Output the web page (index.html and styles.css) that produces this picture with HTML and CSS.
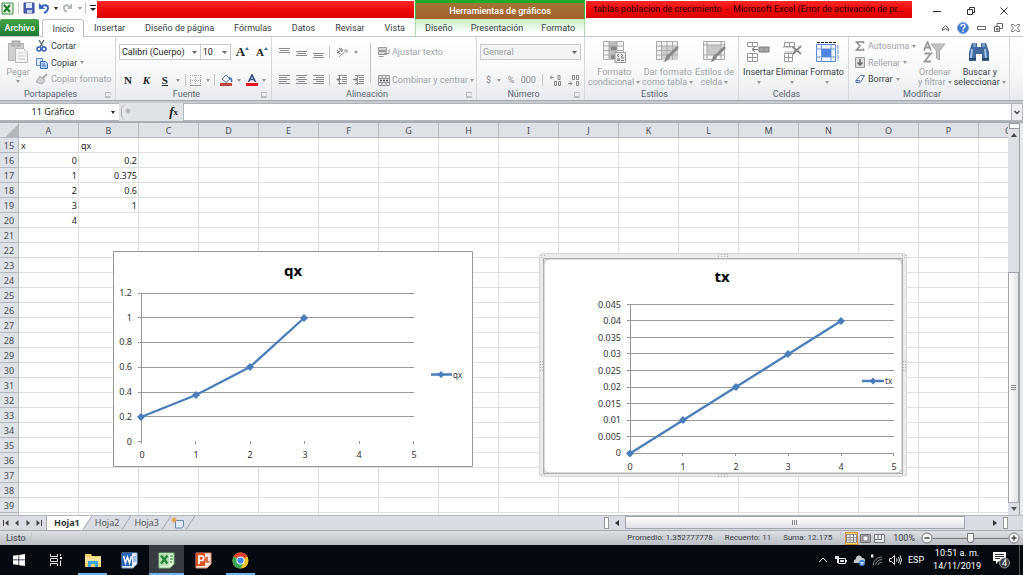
FILE: index.html
```html
<!DOCTYPE html>
<html lang="es">
<head>
<meta charset="utf-8">
<title>tablas poblacion de crecimiento - Microsoft Excel</title>
<link rel="stylesheet" href="styles.css">
</head>
<body>
<header class="top">
  <div class="top-left">
    <div class="qat">
      <svg width="13" height="13" viewBox="0 0 13 13"><path d="M1 1h11v11H1z" fill="#e4f2e2" stroke="#3a8c3f"/><path d="M3 3l6 7M9 3l-6 7" stroke="#1f7a2c" stroke-width="2"/></svg>
      <i class="vsep"></i>
      <button class="flat" aria-label="Guardar"><svg width="12" height="12" viewBox="0 0 12 12"><path d="M1 1h10v10H1z" fill="#4f62b8" stroke="#37458f"/><path d="M3 1h6v5H3z" fill="#dfe8f8"/><path d="M4 8h5v3H4z" fill="#c3cde4"/></svg></button>
      <button class="flat" aria-label="Deshacer"><svg width="12" height="12" viewBox="0 0 12 12"><path d="M3 5c3-3 7-2 7 1 0 2-2 4-4 5" fill="none" stroke="#3566bd" stroke-width="2"/><path d="M1 1v6h6z" fill="#3566bd"/></svg></button>
      <i class="caret dark"></i>
      <button class="flat" aria-label="Rehacer"><svg width="12" height="12" viewBox="0 0 12 12"><path d="M8 5C5 2 2 3 2 6c0 2 1 3 3 4" fill="none" stroke="#b4b8bd" stroke-width="2"/><path d="M10 1v6H5z" fill="#b4b8bd"/></svg></button>
      <i class="caret"></i>
      <i class="vsep"></i>
      <svg width="6" height="8" viewBox="0 0 6 8"><path d="M0 1.500h6" stroke="#222"/><path d="M0 4h6L3 7z" fill="#222"/></svg>
    </div>
    <div class="red"></div>
  </div>
  <div class="context-title">Herramientas de gráficos</div>
  <div class="top-right">
    <div class="red doc-title">tablas poblacion de crecimiento&nbsp; -&nbsp; Microsoft Excel (Error de activación de pr...</div>
    <div class="win-buttons">
      <button class="flat" aria-label="Minimizar"><svg width="8" height="8" viewBox="0 0 8 8"><path d="M0 4.500h8" stroke="#333"/></svg></button>
      <button class="flat" aria-label="Restaurar"><svg width="8" height="8" viewBox="0 0 8 8"><path d="M.5 2.500h5v5h-5zM2.500 2V.5h5v5H6" fill="none" stroke="#333"/></svg></button>
      <button class="flat" aria-label="Cerrar"><svg width="8" height="8" viewBox="0 0 8 8"><path d="M.5.5l7 7M7.500.5l-7 7" stroke="#333"/></svg></button>
    </div>
  </div>
  <nav class="tabs">
    <button class="file">Archivo</button>
    <button class="tab active">Inicio</button>
    <button class="tab">Insertar</button>
    <button class="tab">Diseño de página</button>
    <button class="tab">Fórmulas</button>
    <button class="tab">Datos</button>
    <button class="tab">Revisar</button>
    <button class="tab">Vista</button>
  </nav>
  <nav class="context-tabs">
    <button class="tab">Diseño</button>
    <button class="tab">Presentación</button>
    <button class="tab">Formato</button>
  </nav>
  <div class="help">
    <button class="flat" aria-label="Contraer"><svg width="7" height="6" viewBox="0 0 7 6"><path d="M.5 5.500V3.500l3-3 3 3v2l-3-2z" fill="#fff" stroke="#555"/></svg></button>
    <button class="flat" aria-label="Ayuda"><svg width="12" height="12" viewBox="0 0 12 12"><circle cx="6" cy="6" r="5.500" fill="#3f78cc" stroke="#7fa6de"/><path d="M4 4.500c0-3 4-2.500 4-.2C8 5.500 6 5.800 6 7.500M6 8.500V10" fill="none" stroke="#fff" stroke-width="1.400"/></svg></button>
    <button class="flat" aria-label="Minimizar libro"><svg width="9" height="6" viewBox="0 0 9 6"><path d="M.5 1.500h8v3h-8z" fill="#fff" stroke="#666"/></svg></button>
    <button class="flat" aria-label="Restaurar libro"><svg width="9" height="9" viewBox="0 0 9 9"><path d="M.5 3.500h5v5h-5zM3 3V.5h5.500v5H6M2.500 5.500h1.500v1.500H2.500z" fill="none" stroke="#666"/></svg></button>
    <button class="flat" aria-label="Cerrar libro"><svg width="9" height="8" viewBox="0 0 9 8"><path d="M.5.5h2.200l1.800 1.800L6.300.5h2.200v1.300L6.400 4l2.100 2.200v1.300H6.300L4.500 5.700 2.700 7.500H.5V6.200L2.600 4 .5 1.800z" fill="#fff" stroke="#666" stroke-width=".9"/></svg></button>
  </div>
</header>

<section class="ribbon">
  <div class="group">
    <div class="body">
      <button class="big off paste"><svg width="22" height="24" viewBox="0 0 22 24"><path d="M1.500 3.500h15v17h-15z" fill="#cfcfcf" stroke="#b3b3b3"/><path d="M5 1h8v5H5z" fill="#bdbdbd" stroke="#a5a5a5"/><path d="M8.500 8.500h8l4 4v10h-12z" fill="#f4f4f4" stroke="#b8b8b8"/><path d="M11 13h5M11 16h7M11 19h7" stroke="#c6c6c6"/></svg>Pegar<i class="caret"></i></button>
      <div class="side">
        <button class="row"><svg width="12" height="12" viewBox="0 0 12 12"><path d="M3 0l4 7M8 0L4 7" stroke="#6b7480" stroke-width="1.500"/><circle cx="3" cy="9" r="2" fill="none" stroke="#2d62b5" stroke-width="1.500"/><circle cx="8" cy="9" r="2" fill="none" stroke="#2d62b5" stroke-width="1.500"/></svg>Cortar</button>
        <button class="row"><svg width="12" height="12" viewBox="0 0 12 12"><path d="M.5 1.500h6v7h-6z" fill="#dce9fb" stroke="#5f8bcb"/><path d="M4.500 4.500h5l2 2v5h-7z" fill="#bcd4f6" stroke="#3c6cb8"/><path d="M6 7h3M6 9h4" stroke="#3c6cb8"/></svg>Copiar <i class="caret"></i></button>
        <button class="row off"><svg width="12" height="12" viewBox="0 0 12 12"><path d="M11 1L6 6" stroke="#aaa" stroke-width="2"/><path d="M4 3l5 4-3 4-6-2z" fill="#d2d2d2" stroke="#aaa"/></svg>Copiar formato</button>
      </div>
    </div>
    <div class="label">Portapapeles<i class="launch"></i></div>
  </div>

  <div class="group">
    <div class="body lines">
      <div class="line joined">
        <select class="combo family" aria-label="Fuente"><option>Calibri (Cuerpo)</option></select><select class="combo size" aria-label="Tamaño"><option>10</option></select>
        <button class="flat serif grow" aria-label="Aumentar tamaño">A<i class="up"></i></button>
        <button class="flat serif shrink" aria-label="Reducir tamaño">A<i class="up"></i></button>
      </div>
      <div class="line font-line">
        <button class="flat serif"><b>N</b></button>
        <button class="flat serif"><b><em>K</em></b></button>
        <button class="flat serif"><b><u>S</u></b></button>
        <i class="caret"></i><i class="vsep"></i>
        <button class="flat" aria-label="Bordes"><svg width="11" height="11" viewBox="0 0 11 11"><path d="M.5 0v10M5.500 0v10M10.500 0v10M0 .5h11M0 5.500h11" stroke="#aaa" stroke-dasharray="1 1"/><path d="M0 10.500h11" stroke="#999"/></svg></button>
        <i class="caret"></i><i class="vsep"></i>
        <button class="flat" aria-label="Relleno"><svg width="13" height="12" viewBox="0 0 13 12"><path d="M2 5l4-4 4 4-4 3.500z" fill="#eef3fa" stroke="#4a6ea8"/><path d="M9 4c2 0 3 1 2.500 4" stroke="#2f64b5" stroke-width="1.500" fill="none"/><path d="M0 9h12v3H0z" fill="#c0453b"/></svg></button>
        <i class="caret"></i>
        <button class="flat" aria-label="Color de fuente"><svg width="12" height="12" viewBox="0 0 12 12"><path d="M2.500 8L6 .8 9.500 8M4 5.500h4" fill="none" stroke="#3b5280" stroke-width="1.600"/><path d="M0 9h12v3H0z" fill="#e8121c"/></svg></button>
        <i class="caret"></i>
      </div>
    </div>
    <div class="label">Fuente<i class="launch"></i></div>
  </div>

  <div class="group">
    <div class="body align-body">
      <div class="lines">
        <div class="line align-line">
          <button class="flat" aria-label="Alinear arriba"><svg width="11" height="11" viewBox="0 0 11 11"><path d="M0 1.500h11M1 3.500h9M0 5.500h11" stroke="#8c8c8c"/></svg></button>
          <button class="flat" aria-label="Alinear en el medio"><svg width="11" height="11" viewBox="0 0 11 11"><path d="M0 4.500h11M1 6.500h9M0 8.500h11" stroke="#8c8c8c"/></svg></button>
          <button class="flat" aria-label="Alinear abajo"><svg width="11" height="11" viewBox="0 0 11 11"><path d="M0 6.500h11M1 8.500h9M0 10.500h11" stroke="#8c8c8c"/></svg></button>
          <i class="vsep"></i>
          <button class="flat" aria-label="Orientación"><svg width="12" height="11" viewBox="0 0 12 11"><path d="M3 10l8-7M8 3h3v3" fill="none" stroke="#999"/><path d="M1 3l3 4M3 1l3 4M1 6l3-2M5 1l2 3" stroke="#888" stroke-width="1.200"/></svg></button>
          <i class="caret"></i>
        </div>
        <div class="line align-line">
          <button class="flat" aria-label="Izquierda"><svg width="11" height="10" viewBox="0 0 11 10"><path d="M0 .5h11M0 2.500h8M0 4.500h11M0 6.500h8M0 8.500h11" stroke="#8c8c8c"/></svg></button>
          <button class="flat" aria-label="Centrar"><svg width="11" height="10" viewBox="0 0 11 10"><path d="M0 .5h11M2 2.500h7M0 4.500h11M2 6.500h7M0 8.500h11" stroke="#8c8c8c"/></svg></button>
          <button class="flat" aria-label="Derecha"><svg width="11" height="10" viewBox="0 0 11 10"><path d="M0 .5h11M3 2.500h8M0 4.500h11M3 6.500h8M0 8.500h11" stroke="#8c8c8c"/></svg></button>
          <i class="vsep"></i>
          <button class="flat" aria-label="Disminuir sangría"><svg width="11" height="10" viewBox="0 0 11 10"><path d="M2 .5h9M6 2.500h5M6 4.500h5M6 6.500h5M2 8.500h9M3.500 0v10" stroke="#8c8c8c"/><path d="M5 4.500H1M3 2.500l-2 2 2 2" fill="none" stroke="#777"/></svg></button>
          <button class="flat" aria-label="Aumentar sangría"><svg width="11" height="10" viewBox="0 0 11 10"><path d="M2 .5h9M6 2.500h5M6 4.500h5M6 6.500h5M2 8.500h9M4.500 0v10" stroke="#8c8c8c"/><path d="M0 4.500h4M2 2.500l2 2-2 2" fill="none" stroke="#777"/></svg></button>
        </div>
      </div>
      <i class="vsep tall"></i>
      <div class="lines">
        <button class="row off"><svg width="12" height="11" viewBox="0 0 12 11"><path d="M.5.5h8v3h-8zM.5 4.500h8v3h-8z" fill="#d8d8d8" stroke="#999"/><path d="M.5 9.500h5M11 2.500v4H6" fill="none" stroke="#999"/></svg>Ajustar texto</button>
        <button class="row off"><svg width="12" height="11" viewBox="0 0 12 11"><path d="M.5.5h11v10H.5zM0 3.500h12M0 7.500h12M4 0v3M8 0v3M4 8v3M8 8v3" fill="#e2e2e2" stroke="#999"/><path d="M2 5.500h2M8 5.500h2M5 5.500h2" stroke="#555" stroke-width="1.500"/></svg>Combinar y centrar <i class="caret"></i></button>
      </div>
    </div>
    <div class="label">Alineación<i class="launch"></i></div>
  </div>

  <div class="group">
    <div class="body lines">
      <div class="line"><select class="combo general" aria-label="Formato de número"><option>General</option></select></div>
      <div class="line number-line">
        <button class="flat">$</button><i class="caret"></i>
        <button class="flat">%</button>
        <button class="flat">000</button>
        <i class="vsep"></i>
        <button class="flat" aria-label="Aumentar decimales"><svg width="12" height="11" viewBox="0 0 12 11"><path d="M0 2.500h4M2 .5l-2 2 2 2M8 .5h2v4H8zM4.500 6.500h2v4h-2zM8.500 6.500h2v4h-2z" fill="none" stroke="#888"/></svg></button>
        <button class="flat" aria-label="Disminuir decimales"><svg width="12" height="11" viewBox="0 0 12 11"><path d="M0 8.500h4M2 6.500l2 2-2 2M4.500.5h2v4h-2zM8.500.5h2v4h-2zM8.500 6.500h2v4h-2z" fill="none" stroke="#888"/></svg></button>
      </div>
    </div>
    <div class="label">Número<i class="launch"></i></div>
  </div>

  <div class="group">
    <div class="body styles-body">
      <button class="big off"><svg width="23" height="22" viewBox="0 0 23 22"><path d="M.5.5h20v18H.5z" fill="#f3f3f3" stroke="#aaa"/><path d="M6 0h8v19H6z" fill="#bdbdbd"/><path d="M8 5h6v4H8zM8 14h4v4H8z" fill="#888"/><path d="M0 5h21M0 9.500h21M0 14h21M6 0v19M14 0v19" stroke="#aaa"/><path d="M12 11.500h10.500v10H12z" fill="#ececec" stroke="#999"/><path d="M16 13l-2 1.500 2 1.500M18 13l2 1.500-2 1.500M14 18h3M18 17h3M18 19.500h3M14 19.500h3" fill="none" stroke="#777"/></svg><span>Formato<br>condicional <i class="caret"></i></span></button>
      <button class="big off"><svg width="23" height="22" viewBox="0 0 23 22"><path d="M.5.5h21v18H.5z" fill="#f3f3f3" stroke="#aaa"/><path d="M5 5h17v14H5z" fill="#d0d0d0"/><path d="M0 5h22M0 9.500h22M0 14h22M5.500 0v19M11 0v19M16.500 0v19" stroke="#aaa"/><path d="M22 6l-8 8" stroke="#888" stroke-width="3"/><path d="M15 13c-1 5-4 8-8 8 3-2 2-6 5-8z" fill="#888"/></svg><span>Dar formato<br>como tabla <i class="caret"></i></span></button>
      <button class="big off"><svg width="23" height="22" viewBox="0 0 23 22"><path d="M.5.5h21v18H.5z" fill="#f3f3f3" stroke="#aaa"/><path d="M4 4h14v10H4z" fill="#c8c8c8"/><path d="M0 4h22M0 14h22M4 0v19M18 0v19" stroke="#aaa"/><path d="M22 6l-8 8" stroke="#888" stroke-width="3"/><path d="M15 13c-1 5-4 8-8 8 3-2 2-6 5-8z" fill="#888"/></svg><span>Estilos de<br>celda <i class="caret"></i></span></button>
    </div>
    <div class="label">Estilos</div>
  </div>

  <div class="group">
    <div class="body cells-body">
      <button class="big"><svg width="23" height="22" viewBox="0 0 23 22"><path d="M.5 1.500h10v4H.5zM5.500 1v5M.5 12.500h10v8H.5zM5.500 12v9M0 16.500h11" fill="#fff" stroke="#999"/><path d="M12 6h10v5H12z" fill="#aaa" stroke="#777"/><path d="M17 6v5" stroke="#888"/><path d="M11 8.500H5M8 6L5 8.500 8 11" fill="none" stroke="#777"/></svg>Insertar<i class="caret"></i></button>
      <button class="big"><svg width="23" height="22" viewBox="0 0 23 22"><path d="M3.500 1.500h10v4h-10zM8.500 1v5M3.500 12.500h8v8h-8zM7.500 12v9M3 16.500h9" fill="#fff" stroke="#999"/><path d="M2 6h9l4 3-4 2H4" fill="none" stroke="#888" stroke-dasharray="2 1"/><path d="M12 6l8 7M20 5l-8 8" stroke="#888" stroke-width="1.800"/></svg>Eliminar<i class="caret"></i></button>
      <button class="big"><svg width="23" height="22" viewBox="0 0 23 22"><path d="M1 1.500h19" stroke="#222" stroke-dasharray="3 1"/><path d="M.5 3.500h19v17H.5z" fill="#f1f6fe" stroke="#5b88cf"/><path d="M5.500 3v18M15 3v18M0 8h20M0 16h20" stroke="#6f99d8"/><path d="M6 8h9v8H6z" fill="#4f86e0"/><path d="M22 4v16" stroke="#5b88cf" stroke-dasharray="4 1"/></svg>Formato<i class="caret"></i></button>
    </div>
    <div class="label">Celdas</div>
  </div>

  <div class="group">
    <div class="body edit-body">
      <div class="side">
        <button class="row off"><svg width="10" height="10" viewBox="0 0 10 10"><path d="M8.500 2.500V1h-7l3.500 4-3.500 4h7V7.500" fill="none" stroke="#888" stroke-width="1.500"/></svg>Autosuma <i class="caret"></i></button>
        <button class="row off"><svg width="10" height="11" viewBox="0 0 10 11"><path d="M.5.5h9v10h-9z" fill="#ddd" stroke="#999"/><path d="M5 2v6M2.500 5.500L5 8l2.500-2.500" fill="none" stroke="#666" stroke-width="1.500"/></svg>Rellenar <i class="caret"></i></button>
        <button class="row"><svg width="10" height="10" viewBox="0 0 10 10"><path d="M1 6.500L5.500 1.500h4L6 7.500 4 8.500H1z" fill="#fff" stroke="#4b6fae"/><path d="M1 6.500h3.500l1 1.500" fill="none" stroke="#4b6fae"/></svg>Borrar <i class="caret"></i></button>
      </div>
      <button class="big off"><svg width="23" height="22" viewBox="0 0 23 22"><path d="M8 3h14l-5.500 7v9l-3-2v-7z" fill="#c2c2c2" stroke="#aaa"/><path d="M1 9.500L4.500 1 8 9.500M2.500 6.500h4M1.500 12.500H8l-6.500 8H8" fill="none" stroke="#999" stroke-width="1.800"/></svg><span>Ordenar<br>y filtrar <i class="caret"></i></span></button>
      <button class="big"><svg width="23" height="22" viewBox="0 0 23 22"><path d="M4 2h5v4h4V2h5l3 9v9h-7v-7H8v7H1v-9z" fill="#3f699f"/><path d="M5 2h3v4H5zM14 2h3v4h-3z" fill="#7a9cc8"/><path d="M4 8l-1 10M17 8l1 10" stroke="#a9c5e8" stroke-width="2"/><path d="M1 18h7M14 18h7" stroke="#27466f" stroke-width="2"/></svg><span>Buscar y<br>seleccionar <i class="caret"></i></span></button>
    </div>
    <div class="label">Modificar</div>
  </div>
  <div class="group end"></div>
</section>

<section class="formula">
  <div class="name-box"><input aria-label="Cuadro de nombres" value="11 Gráfico"><i class="caret dark"></i></div>
  <div class="fx"><i class="knob"></i><button class="flat serif"><em>f</em><small>x</small></button></div>
  <input class="formula-input" aria-label="Barra de fórmulas" value="">
  <button class="expand" aria-label="Expandir"><svg width="6" height="5" viewBox="0 0 6 5"><path d="M.5 1L3 3.500 5.500 1" fill="none" stroke="#444" stroke-width="1.400"/></svg></button>
</section>

<main class="work">
  <div class="sheet">
    <table class="grid">
      <thead><tr><th class="corner"></th><th>A</th><th>B</th><th>C</th><th>D</th><th>E</th><th>F</th><th>G</th><th>H</th><th>I</th><th>J</th><th>K</th><th>L</th><th>M</th><th>N</th><th>O</th><th>P</th><th>Q</th></tr></thead>
      <tbody>
        <tr><th>15</th><td class="txt">x</td><td class="txt">qx</td><td class="rest" colspan="15"></td></tr>
        <tr><th>16</th><td>0</td><td>0.2</td><td class="rest" colspan="15"></td></tr>
        <tr><th>17</th><td>1</td><td>0.375</td><td class="rest" colspan="15"></td></tr>
        <tr><th>18</th><td>2</td><td>0.6</td><td class="rest" colspan="15"></td></tr>
        <tr><th>19</th><td>3</td><td>1</td><td class="rest" colspan="15"></td></tr>
        <tr><th>20</th><td>4</td><td></td><td class="rest" colspan="15"></td></tr>
        <tr><th>21</th><td></td><td></td><td class="rest" colspan="15"></td></tr>
        <tr><th>22</th><td></td><td></td><td class="rest" colspan="15"></td></tr>
        <tr><th>23</th><td></td><td></td><td class="rest" colspan="15"></td></tr>
        <tr><th>24</th><td></td><td></td><td class="rest" colspan="15"></td></tr>
        <tr><th>25</th><td></td><td></td><td class="rest" colspan="15"></td></tr>
        <tr><th>26</th><td></td><td></td><td class="rest" colspan="15"></td></tr>
        <tr><th>27</th><td></td><td></td><td class="rest" colspan="15"></td></tr>
        <tr><th>28</th><td></td><td></td><td class="rest" colspan="15"></td></tr>
        <tr><th>29</th><td></td><td></td><td class="rest" colspan="15"></td></tr>
        <tr><th>30</th><td></td><td></td><td class="rest" colspan="15"></td></tr>
        <tr><th>31</th><td></td><td></td><td class="rest" colspan="15"></td></tr>
        <tr><th>32</th><td></td><td></td><td class="rest" colspan="15"></td></tr>
        <tr><th>33</th><td></td><td></td><td class="rest" colspan="15"></td></tr>
        <tr><th>34</th><td></td><td></td><td class="rest" colspan="15"></td></tr>
        <tr><th>35</th><td></td><td></td><td class="rest" colspan="15"></td></tr>
        <tr><th>36</th><td></td><td></td><td class="rest" colspan="15"></td></tr>
        <tr><th>37</th><td></td><td></td><td class="rest" colspan="15"></td></tr>
        <tr><th>38</th><td></td><td></td><td class="rest" colspan="15"></td></tr>
        <tr><th>39</th><td></td><td></td><td class="rest" colspan="15"></td></tr>
        <tr><th></th><td></td><td></td><td class="rest" colspan="15"></td></tr>
      </tbody>
    </table>

    <svg class="chart chart-qx" width="361" height="217" viewBox="0 0 361 217">
      <path d="M.5.5h359v215H.5z" fill="#fff" stroke="#999"/>
      <text class="chart-title" x="180" y="25">qx</text>
      <path class="axis" d="M25 42.500h276M25 66.500h276M25 91.500h276M25 116.500h276M25 141.500h276M25 165.500h276M25 190.500h3M28.500 42v151M82.500 190v3M137.500 190v3M191.500 190v3M246.500 190v3M300.500 190v3"/>
      <g class="ylab"><text x="19" y="45">1.2</text><text x="19" y="70">1</text><text x="19" y="94">0.8</text><text x="19" y="119">0.6</text><text x="19" y="144">0.4</text><text x="19" y="169">0.2</text><text x="19" y="194">0</text></g>
      <g class="xlab"><text x="29" y="207">0</text><text x="83" y="207">1</text><text x="137" y="207">2</text><text x="192" y="207">3</text><text x="246" y="207">4</text><text x="301" y="207">5</text></g>
      <path class="series" d="M28 166L83 144L137 116L191 67M318 123.500h21"/>
      <path class="marks" d="M28 162l4 4-4 4-4-4zM83 140l4 4-4 4-4-4zM137 112l4 4-4 4-4-4zM191 63l4 4-4 4-4-4zM328 120l3.500 3.500-3.500 3.500-3.500-3.500z"/>
      <text class="leg" x="340" y="127">qx</text>
    </svg>

    <svg class="chart chart-tx" width="369" height="225" viewBox="0 0 369 225">
      <rect x=".5" y=".5" width="367" height="223" rx="3" fill="#ececec" stroke="#d6d6d6"/>
      <path d="M4.500 5.500h359v215h-359z" fill="#e4e4e4" stroke="#aaa"/>
      <rect x="5" y="6" width="358" height="214" rx="5" fill="#fff" stroke="#b5b5b5"/>
      <path d="M179 1.500h11M179 3.500h11M179 221.500h11M179 223.500h11M1.500 108v11M3.500 108v11M364.500 108v11M366.500 108v11M2 2.500h4M2 4.500h2M363 2.500h4M365 4.500h2M2 221.500h4M363 221.500h4" stroke="#aaa" stroke-dasharray="1 2"/>
      <text class="chart-title" x="183" y="29">tx</text>
      <path class="axis" d="M88 51.500h267M88 67.500h267M88 84.500h267M88 100.500h267M88 117.500h267M88 134.500h267M88 150.500h267M88 167.500h267M88 183.500h267M88 200.500h267M91.500 51v152M143.500 200v3M196.500 200v3M249.500 200v3M302.500 200v3M354.500 200v3"/>
      <g class="ylab"><text x="82" y="55">0.045</text><text x="82" y="71">0.04</text><text x="82" y="88">0.035</text><text x="82" y="104">0.03</text><text x="82" y="121">0.025</text><text x="82" y="137">0.02</text><text x="82" y="154">0.015</text><text x="82" y="170">0.01</text><text x="82" y="187">0.005</text><text x="82" y="203">0</text></g>
      <g class="xlab"><text x="91" y="217">0</text><text x="144" y="217">1</text><text x="197" y="217">2</text><text x="249" y="217">3</text><text x="302" y="217">4</text><text x="355" y="217">5</text></g>
      <path class="series" d="M91 200.500L302 68M323 128h22"/>
      <path class="marks" d="M91 196.500l4 4-4 4-4-4zM144 163l4 4-4 4-4-4zM197 130l4 4-4 4-4-4zM249 97l4 4-4 4-4-4zM302 64l4 4-4 4-4-4zM334 124.500l3.500 3.500-3.500 3.500-3.500-3.500z"/>
      <text class="leg" x="346" y="131">tx</text>
    </svg>
  </div>
  <div class="vscroll">
    <i class="split"></i>
    <i class="tri up-tri"></i>
    <div class="vtrack"><div class="vthumb"><i></i></div></div>
    <i class="tri down-tri"></i>
  </div>
</main>

<nav class="sheet-bar">
  <div class="sheet-nav">
    <button class="flat" aria-label="Primera hoja"><svg width="6" height="6" viewBox="0 0 6 6"><path d="M0 0h1v6H0zM5.500 0v6L2 3z" fill="#444"/></svg></button>
    <button class="flat" aria-label="Hoja anterior"><svg width="6" height="6" viewBox="0 0 6 6"><path d="M4.500 0v6L1 3z" fill="#444"/></svg></button>
    <button class="flat" aria-label="Hoja siguiente"><svg width="6" height="6" viewBox="0 0 6 6"><path d="M1.500 0v6L5 3z" fill="#444"/></svg></button>
    <button class="flat" aria-label="Última hoja"><svg width="6" height="6" viewBox="0 0 6 6"><path d="M5 0h1v6H5zM.5 0v6L4 3z" fill="#444"/></svg></button>
  </div>
  <button class="sheet-tab current">Hoja1</button><svg class="slant" width="10" height="14" viewBox="0 0 10 14"><path d="M0 0h10L1 13.500H0z" fill="#fff"/><path d="M10 0L1 13.500" stroke="#9aa3ad" fill="none"/></svg>
  <button class="sheet-tab">Hoja2</button><svg class="slant" width="10" height="14" viewBox="0 0 10 14"><path d="M10 0L1 13.500" stroke="#9aa3ad"/></svg>
  <button class="sheet-tab">Hoja3</button><svg class="slant" width="10" height="14" viewBox="0 0 10 14"><path d="M10 0L1 13.500" stroke="#9aa3ad"/></svg>
  <button class="flat" aria-label="Insertar hoja"><svg width="14" height="12" viewBox="0 0 14 12"><path d="M4.500 3.500h8v6l-2 1.500h-6z" fill="#dfe9f7" stroke="#6a86b5"/><path d="M3 0v6M0 3h6M1 1l4 4M5 1L1 5" stroke="#e39a35"/></svg></button>
  <svg class="slant" width="10" height="14" viewBox="0 0 10 14"><path d="M10 0L1 13.500" stroke="#9aa3ad"/></svg>
  <div class="hscroll">
    <i class="hsplit"></i><i class="tri left-tri"></i>
    <div class="htrack"><div class="hthumb"><i></i></div></div>
    <i class="tri right-tri"></i><i class="hsplit"></i>
  </div>
</nav>

<footer class="status">
  <span class="ready">Listo</span><i class="vsep"></i>
  <div class="stats"><span>Promedio: 1.352777778</span><span>Recuento: 11</span><span>Suma: 12.175</span></div>
  <i class="vsep"></i>
  <div class="views">
    <button class="view on" aria-label="Normal"><svg width="11" height="9" viewBox="0 0 11 9"><path d="M.5.5h10v8H.5zM4 0v9M7.500 0v9M0 3.500h11M0 6h11" fill="#fff" stroke="#888"/></svg></button>
    <button class="view" aria-label="Diseño de página"><svg width="11" height="9" viewBox="0 0 11 9"><path d="M.5.5h10v8H.5z" fill="#aaa" stroke="#777"/><path d="M3 2h5v5H3z" fill="#fff" stroke="#777"/></svg></button>
    <button class="view" aria-label="Salto de página"><svg width="11" height="9" viewBox="0 0 11 9"><path d="M.5.5h10v8H.5z" fill="#eee" stroke="#777"/><path d="M4 0v5.500M7.500 0v5.500M0 5.500h8" stroke="#777"/></svg></button>
  </div>
  <span class="zoom">100%</span>
  <button class="round" aria-label="Alejar"><svg width="12" height="12" viewBox="0 0 12 12"><circle cx="6" cy="6" r="5" fill="#f8f8f8" stroke="#777"/><path d="M3.500 6h5" stroke="#444" stroke-width="1.500"/></svg></button>
  <input class="slider" type="range" aria-label="Zoom" min="0" max="200" value="100">
  <button class="round" aria-label="Acercar"><svg width="12" height="12" viewBox="0 0 12 12"><circle cx="6" cy="6" r="5" fill="#f8f8f8" stroke="#777"/><path d="M3.500 6h5M6 3.500v5" stroke="#444" stroke-width="1.500"/></svg></button>
</footer>

<footer class="taskbar">
  <button class="app" aria-label="Inicio de Windows"><svg width="12" height="12" viewBox="0 0 12 12"><path d="M0 1.800l5.500-.8v4.600H0zM6.200.9L12 0v5.600H6.200zM0 6.300h5.500v4.800L0 10.300zM6.200 6.300H12V12l-5.800-.8z" fill="#fff"/></svg></button>
  <button class="app" aria-label="Vista de tareas"><svg width="12" height="12" viewBox="0 0 12 12"><path d="M.5 0v2.500h7V0M.5 12V9.500h7V12M.5 4.500h7v3h-7zM10.500 0v2M10.500 6.500V12" fill="none" stroke="#ddd"/><path d="M10 3h2v2h-2z" fill="#fff"/></svg></button>
  <button class="app run" aria-label="Explorador"><svg width="16" height="14" viewBox="0 0 16 14"><path d="M0 1h6l1 2h9v11H0z" fill="#f5cf6b"/><path d="M0 4h16v6H0z" fill="#fbe39b"/><path d="M3 8h10v6h-3v-3H6v3H3z" fill="#38a9e4"/></svg></button>
  <button class="app" aria-label="Word"><svg width="17" height="17" viewBox="0 0 17 17"><path d="M1 1h15v11l-4 4H1z" fill="#e6effb" stroke="#8db1e3"/><path d="M1 1h10v13H1z" fill="#2a66bd"/><path d="M2.500 4l2 7 2-6 2 6 2-7" fill="none" stroke="#fff" stroke-width="1.500"/><path d="M12 5h3M12 7h3M12 9h3" stroke="#5d8cd0"/></svg></button>
  <button class="app run active" aria-label="Excel"><svg width="17" height="17" viewBox="0 0 17 17"><path d="M1 1h15v11l-4 4H1z" fill="#e3f4df" stroke="#7dbd79"/><path d="M1 1h10v13H1z" fill="#b9e0b3"/><path d="M3 3.500l6.500 8M9.500 3.500l-6.500 8" stroke="#238537" stroke-width="2.300"/><path d="M12 4h3M12 7h3M12 10h2" stroke="#5aa85a" stroke-width="1.500"/></svg></button>
  <button class="app" aria-label="PowerPoint"><svg width="17" height="17" viewBox="0 0 17 17"><path d="M1 1h15v11l-4 4H1z" fill="#fbe6de" stroke="#e8906f"/><path d="M1 1h9v13H1z" fill="#dd5427"/><path d="M4 12V4h2.500a2.200 2.200 0 0 1 0 4.500H4" fill="none" stroke="#fff" stroke-width="1.700"/><path d="M13 5a3 3 0 1 0 2 4h-2z" fill="#e1704a"/></svg></button>
  <button class="app run" aria-label="Chrome"><svg width="17" height="17" viewBox="0 0 17 17"><circle cx="8.500" cy="8.500" r="8" fill="#f9c826"/><path d="M8.500 8.500L1.600 4.500a8 8 0 0 1 13.800 0z" fill="#e0402f"/><path d="M8.500 8.500L1.600 4.500a8 8 0 0 0 6.900 12l3.500-6z" fill="#3aa757"/><circle cx="8.500" cy="8.500" r="4" fill="#fff"/><circle cx="8.500" cy="8.500" r="3.100" fill="#4285f4"/></svg></button>
  <div class="tray">
    <svg width="12" height="12" viewBox="0 0 12 12"><path d="M2 8l4-4 4 4" fill="none" stroke="#fff"/></svg>
    <svg width="12" height="12" viewBox="0 0 12 12"><path d="M3.500 4.500h7v5h-7zM11.500 6v2M2.500 5v4" fill="none" stroke="#eee"/><path d="M5 6h4v2H5zM0 2h4v3H0z" fill="#ddd"/></svg>
    <svg width="12" height="12" viewBox="0 0 12 12"><path d="M1 9a3 3 0 0 1 2-4 3 3 0 0 1 6-1 2.500 2.500 0 0 1 1 5z" fill="#c8c8c8"/><circle cx="9" cy="9" r="3" fill="#2b7dd4"/><path d="M7.500 8.500h3M10.500 10h-3" stroke="#fff"/></svg>
    <svg width="12" height="12" viewBox="0 0 12 12"><path d="M2 11a9 9 0 0 1 9-8M4.500 11A6.500 6.500 0 0 1 11 5.500M7 11a4 4 0 0 1 4-3" fill="none" stroke="#8a8a8a"/><path d="M1 0v4M-.5 1l3 2M2.500 1l-3 2" stroke="#fff"/></svg>
    <svg width="13" height="12" viewBox="0 0 13 12"><path d="M.5 4.500h2l3-3v9l-3-3h-2zM7.500 4.500q1 1.500 0 3M9.500 3q2 3 0 6M11 1.500q3 4.500 0 9" fill="none" stroke="#eee"/></svg>
    <span>ESP</span>
    <time class="clock">10:51 a. m.<br>14/11/2019</time>
    <button class="notice" aria-label="Notificaciones"><svg width="17" height="18" viewBox="0 0 17 18"><path d="M0 1h13v9H6l-3 3v-3H0z" fill="#fff"/><path d="M2 3.500h9M2 5.500h9M2 7.500h5" stroke="#333"/><circle cx="11.500" cy="12" r="5" fill="#3a3d42" stroke="#999"/><text x="11.500" y="15" class="badge-num">4</text></svg></button>
    <i class="peek"></i>
  </div>
</footer>
</body>
</html>
```
FILE: styles.css
```css
* { box-sizing: border-box; }
html, body { height: 100%; margin: 0; }
body { display: flex; flex-direction: column; overflow: hidden; background: #fff; font: 9px/10px Roboto, "Liberation Sans", sans-serif; color: #3a3f46; }
button, input, select { margin: 0; padding: 0; border: 0; background: none; font: inherit; color: inherit; border-radius: 0; }
svg { display: block; flex: none; }
i { flex: none; }
.flat { display: flex; align-items: center; justify-content: center; }
.serif { font-family: "Liberation Serif", serif; font-size: 11px; color: #222; }
.caret { display: inline-block; border: 2px solid transparent; border-top: 3px solid #999; border-bottom: 0; vertical-align: middle; }
.caret.dark { border-top-color: #222; }
.vsep { width: 1px; height: 12px; background: #c3c7cc; }

.top { display: grid; grid-template-columns: minmax(0, 415fr) minmax(0, 170fr) minmax(0, 438fr); grid-template-rows: 19px 18px; flex: none; }
.top-left, .top-right { display: flex; min-width: 0; }
.qat { display: flex; align-items: center; gap: 3px; width: 97px; flex: none; padding: 0 1px 3px; justify-content: space-between; }
.red { flex: 1; margin: 1px 1px 1px 0; background: linear-gradient(#fb2a2a, #f00c0c 45%, #dd0000); }
.context-title { display: flex; align-items: center; justify-content: center; border-top: 3px solid #21ab26; background: linear-gradient(#a07434, #a9602a); color: #fff; font-weight: 500; border-left: 1px solid #3caf3c; border-right: 1px solid #3caf3c; }
.doc-title { flex: none; margin-left: 1px; width: 326px; padding-left: 8px; line-height: 17px; color: #260000; white-space: nowrap; overflow: hidden; }
.win-buttons { display: flex; flex: 1; justify-content: space-between; align-items: center; padding: 2px 15px 0 20px; }
.tabs, .context-tabs { display: flex; border-bottom: 1px solid #c2c7cd; white-space: nowrap; }
.tab { padding: 0 10px; }
.file { width: 42px; margin-right: 3px; background: linear-gradient(#48a548, #1c7a30); color: #fff; font-weight: 500; border-radius: 2px 2px 0 0; }
.tab.active { border: 1px solid #bcc2c9; border-bottom: 0; border-radius: 3px 3px 0 0; margin-bottom: -1px; padding: 0 9px; background: #fff; }
.context-tabs { background: linear-gradient(#c4efc4, #fff 80%); border-left: 1px solid #a9dca9; border-right: 1px solid #a9dca9; justify-content: space-between; }
.context-tabs .tab { padding: 0 9px; }
.help { display: flex; align-items: center; justify-content: flex-end; gap: 8px; padding-right: 3px; border-bottom: 1px solid #c2c7cd; }

.ribbon { display: grid; grid-template-columns: minmax(0, 116fr) minmax(0, 156fr) minmax(0, 205fr) minmax(0, 108fr) minmax(0, 154fr) minmax(0, 110fr) minmax(0, 161fr) minmax(0, 13fr); height: 64px; flex: none; background: linear-gradient(#fff, #f7f8f9 55%, #e7eaee); border-bottom: 1px solid #a4a9b0; white-space: nowrap; }
.group { display: flex; flex-direction: column; min-width: 0; border-right: 1px solid #d5d9dd; padding-top: 3px; }
.group.end { border: 0; }
.body { display: flex; flex: 1; min-height: 0; }
.label { position: relative; height: 12px; line-height: 13px; text-align: center; color: #5c6670; padding-right: 14px; }
.launch { position: absolute; right: 4px; top: 4px; width: 6px; height: 6px; border: 1px solid #b8bdc3; border-right-color: #d5d9dd; border-bottom: 2px solid #b8bdc3; }
.big { display: flex; flex-direction: column; align-items: center; gap: 4px; text-align: center; padding-top: 1px; }
.off { color: #a0a3a7; }
.paste { width: 36px; gap: 3px; padding-top: 0; }
.side { display: flex; flex-direction: column; justify-content: space-between; padding: 0 0 3px; }
.row { display: flex; align-items: center; gap: 3px; height: 12px; }
.lines { display: flex; flex-direction: column; gap: 12px; padding-top: 4px; }
.body.lines { padding-left: 3px; padding-right: 3px; }
.line { display: flex; align-items: center; height: 16px; }
.combo { height: 16px; border: 1px solid #c5cad0; padding: 0 2px; appearance: none; background: #fff url("data:image/svg+xml,%3Csvg xmlns='http://www.w3.org/2000/svg' width='5' height='3'%3E%3Cpath d='M0 0h5L2.500 3z' fill='%23666'/%3E%3C/svg%3E") no-repeat right 3px center; color: #222; }
.combo.general { width: 100%; background-color: #f3f4f5; color: #999; }
.family { width: 85px; }
.size { width: 31px; border-left: 0; }
.grow { margin-left: 5px; font-size: 13px; font-weight: bold; }
.shrink { margin-left: 7px; font-weight: bold; }
.up { align-self: flex-start; border: 2px solid transparent; border-top: 0; border-bottom: 3px solid #3b6fb5; }
.font-line { justify-content: space-between; padding: 0 2px 0 2px; }
.font-line .serif { width: 14px; }
.lines .row { height: 16px; gap: 2px; }
.align-body { padding-left: 7px; gap: 7px; }
.align-body .lines { width: 84px; }
.align-body .vsep { margin-left: -1px; }
.align-body .vsep.tall { height: 40px; margin: 3px 0 0; }
.align-line { gap: 6px; }
.number-line { color: #888; justify-content: space-between; padding: 0 1px 0 6px; }
.styles-body { justify-content: space-between; padding: 0 4px 0 3px; }
.cells-body { justify-content: space-between; padding: 0 4px; }
.edit-body { justify-content: space-between; padding: 0 3px 0 6px; }

.formula { display: flex; height: 22px; flex: none; background: #dfe2e7; border-top: 2px solid #c6cad0; border-bottom: 2px solid #a9adb5; }
.name-box { display: flex; align-items: center; width: 119px; padding-right: 4px; background: #fff; border-top: 1px solid #b0b5bc; border-bottom: 1px solid #b0b5bc; }
.name-box input { flex: 1; min-width: 0; padding-right: 5px; text-align: center; font-family: "Noto Sans", sans-serif; color: #222; }
.fx { display: flex; align-items: center; justify-content: space-between; width: 65px; padding: 0 5px 0 2px; border-right: 1px solid #b0b5bc; }
.fx .serif { font-size: 13px; font-weight: bold; }
.fx small { font-size: 9px; }
.knob { width: 11px; height: 16px; border-left: 1px solid #aaa; border-radius: 8px; background: radial-gradient(circle at 6px 7px, #bbb 2px, #e3e6ea 3px); }
.formula-input { flex: 1; min-width: 0; background: #fff; border-top: 1px solid #b0b5bc; border-bottom: 1px solid #b0b5bc; }
.expand { width: 12px; border: 1px solid #b0b5bc; display: flex; align-items: center; justify-content: center; background: #eceef1; }

.work { display: flex; flex: 1; min-height: 0; }
.sheet { position: relative; flex: 1; min-width: 0; overflow: hidden; }
.grid { border-collapse: separate; border-spacing: 0; table-layout: fixed; width: 1039px; font-family: "Noto Sans", sans-serif; color: #1c1c1c; }
.grid th, .grid td { height: 15px; padding: 2px 1px 0 2px; line-height: 12px; border-right: 1px solid #dfdfe1; border-bottom: 1px solid #dfdfe1; text-align: right; }
.grid th { width: 60px; padding: 2px 0 0; text-align: center; font-weight: normal; background: #dee1e6; color: #4a4d52; border-color: #b4b8be; }
.grid .corner, .grid tbody th { width: 19px; }
.grid .corner { background: linear-gradient(135deg, #dee1e6 60%, #b2b7bd 60%); }
.grid .txt { text-align: left; }
.grid .rest { background: repeating-linear-gradient(90deg, #fff 0 59px, #dfdfe1 59px 60px); }
.chart { position: absolute; font-family: "Noto Sans", sans-serif; fill: #333; }
.chart-qx { left: 113px; top: 128px; }
.chart-tx { left: 539px; top: 130px; }
.chart-title { font-size: 15px; font-weight: bold; text-anchor: middle; fill: #000; }
.axis { stroke: #999; fill: none; }
.ylab { text-anchor: end; }
.xlab { text-anchor: middle; }
.series { stroke: #4a7ebb; stroke-width: 2.3; fill: none; }
.marks { fill: #4a7ebb; }
.leg { font-size: 8px; }

.vscroll { display: flex; flex-direction: column; align-items: center; width: 15px; flex: none; background: #dce0e6; border-right: 3px solid #e6e9ed; box-shadow: inset -1px 0 #9da3ab; }
.split { width: 11px; height: 6px; border: 1px solid #999; background: #fff; }
.tri { border: 3px solid transparent; }
.up-tri { margin-top: 4px; border-top: 0; border-bottom: 4px solid #444; }
.down-tri { border-bottom: 0; border-top: 4px solid #555; margin: 4px 0; }
.vtrack { flex: 1; align-self: stretch; display: flex; flex-direction: column; justify-content: flex-end; }
.vthumb { display: flex; align-items: center; justify-content: center; height: 63%; margin-right: 1px; border: 1px solid #a0a6ae; background: linear-gradient(90deg, #fff, #dfe2e7); }
.vthumb i { width: 5px; height: 5px; background: repeating-linear-gradient(#888 0 1px, transparent 1px 2px); }

.sheet-bar { display: flex; align-items: stretch; height: 15px; flex: none; background: #d9dde3; border-top: 1px solid #b4b8be; font-family: "Noto Sans", sans-serif; }
.sheet-nav { display: flex; width: 47px; justify-content: space-between; padding: 0 4px 0 3px; border-right: 1px solid #aaa; }
.sheet-tab { padding: 0 2px 0 3px; color: #555; }
.sheet-tab.current { background: #fff; color: #333; font-weight: bold; padding-left: 7px; }
.hscroll { display: flex; align-items: center; margin-left: auto; width: 41%; padding-right: 15px; gap: 6px; }
.hsplit { width: 5px; height: 12px; border: 1px solid #999; background: #fff; }
.left-tri { border-left: 0; border-right: 4px solid #333; }
.right-tri { border-right: 0; border-left: 4px solid #333; }
.htrack { flex: 1; align-self: stretch; }
.hthumb { display: flex; width: 94%; height: 13px; align-items: center; justify-content: center; border: 1px solid #a0a6ae; background: linear-gradient(#fff, #dfe2e7); }
.hthumb i { width: 5px; height: 5px; background: repeating-linear-gradient(90deg, #888 0 1px, transparent 1px 2px); }

.status { display: flex; align-items: center; height: 15px; flex: none; padding: 0 3px 0 6px; background: linear-gradient(#dcdfe3, #b9bdc3); border-top: 1px solid #a5aab1; white-space: nowrap; }
.ready { width: 25px; }
.stats { display: flex; gap: 12px; margin: 0 8px 0 auto; font-size: 8px; }
.views { display: flex; gap: 1px; padding-left: 4px; }
.view { display: flex; align-items: center; justify-content: center; width: 13px; height: 13px; }
.view.on { background: #ffdd6c; border: 1px solid #d9903a; }
.zoom { margin: 0 6px 0 7px; }
.slider { width: 75px; height: 12px; appearance: none; background: linear-gradient(#777, #777) center / 100% 1px no-repeat; }
.slider::-webkit-slider-thumb { appearance: none; width: 7px; height: 10px; background: #f5f5f5; border: 1px solid #777; border-radius: 1px 1px 4px 4px; }

.taskbar { display: flex; height: 30px; flex: none; background: #050a11; color: #fff; }
.app { display: flex; align-items: center; justify-content: center; width: 37px; border: solid transparent; border-width: 0 4px; }
.run { background: linear-gradient(#6fb1e8, #6fb1e8) bottom / 100% 2px no-repeat; background-clip: padding-box; background-origin: padding-box; }
.run.active { border-width: 0 1px; background-color: #383c42; }
.tray { display: flex; align-items: center; margin-left: auto; gap: 6px; }
.clock { text-align: center; line-height: 13px; margin-left: 3px; }
.notice { margin-left: 6px; }
.badge-num { font-size: 9px; fill: #fff; text-anchor: middle; }
.peek { width: 4px; align-self: stretch; border-left: 1px solid #555; margin-left: 3px; }
```
